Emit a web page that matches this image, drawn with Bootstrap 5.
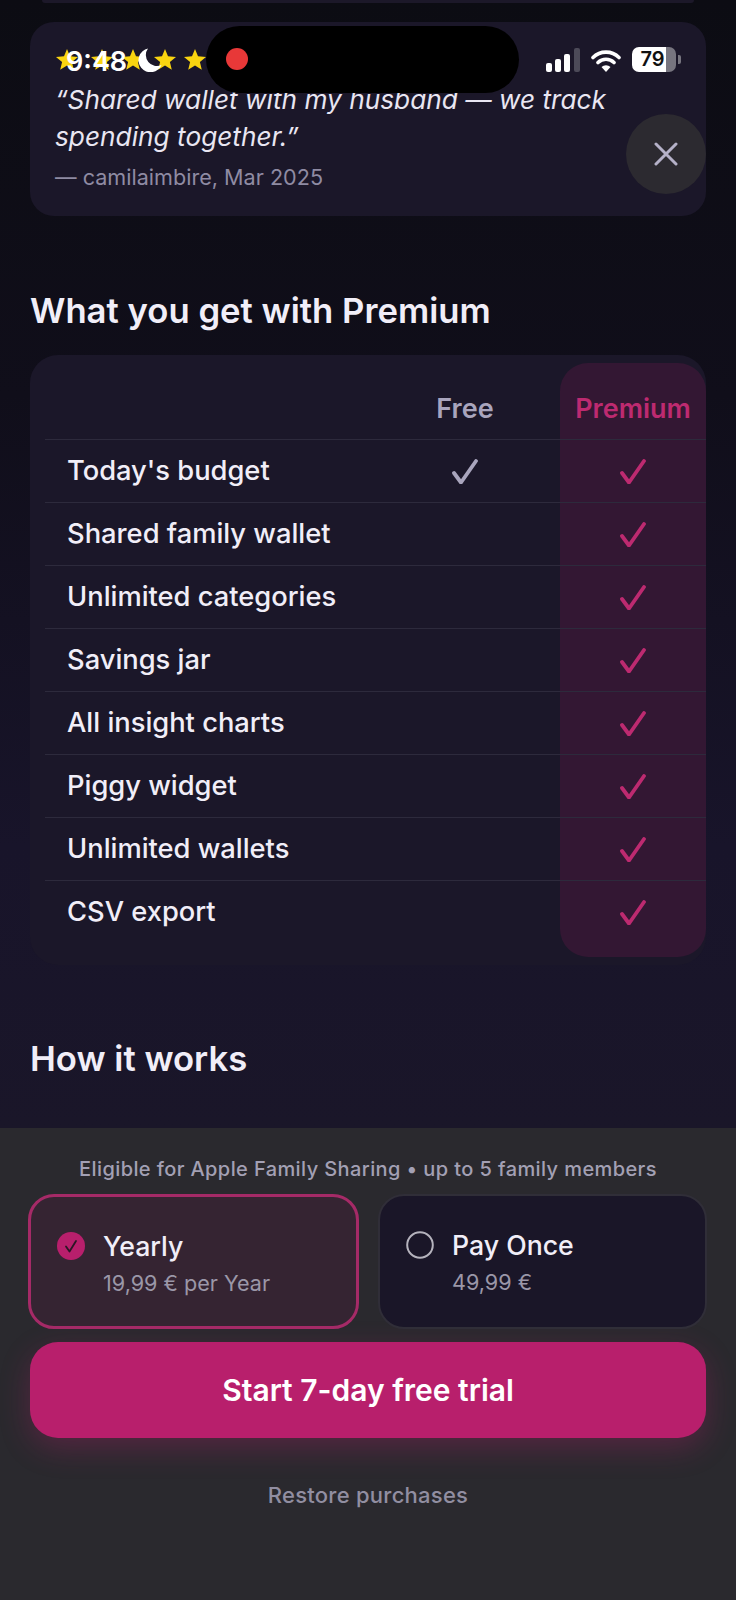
<!DOCTYPE html>
<html>
  <head>
    <title>Premium</title>
    <link href="https://cdn.jsdelivr.net/npm/bootstrap@5.3.3/dist/css/bootstrap.min.css" rel="stylesheet" />
    <script src="https://cdn.jsdelivr.net/npm/bootstrap@5.3.3/dist/js/bootstrap.bundle.min.js"></script>
    <style>
      body {
        width: 736px;
        height: 1600px;
        overflow: hidden;
        background: #0e0d16;
        font-family: Inter, "Liberation Sans", sans-serif;
        color: #f1eef8;
      }
      .page-wrap {
        height: 1128px;
        overflow: hidden;
        padding: 0 30px;
        background: linear-gradient(180deg, #0c0c13 0%, #100e1a 35%, #18142a 75%, #1a1629 100%);
      }
      .prev-card {
        height: 3px;
        margin: 0 12px 19px;
        background: #1c1829;
        border-radius: 0 0 6px 6px;
      }
      .quote-card {
        height: 194px;
        padding: 20px 25px;
        background: #1b1729;
        border-radius: 24px;
      }
      .star-row {
        height: 36px;
        padding-left: 1px;
      }
      .quote-text {
        margin: 4px 0 0;
        font-size: 26.25px;
        font-style: italic;
        line-height: 36.500px;
        color: #e9e6f2;
      }
      .quote-by {
        margin: 7px 0 0;
        font-size: 21.600px;
        line-height: 30px;
        color: #8f8ba3;
      }
      .sect-title {
        margin: 0;
        font-size: 34.700px;
        font-weight: 600;
        line-height: 40px;
        color: #f1eef8;
      }
      .title-one { padding-top: 74px; padding-bottom: 25px; }
      .title-two { padding-top: 73px; }
      .compare-card {
        height: 610px;
        padding: 0 0 0 15px;
        background: #1b1729;
        border-radius: 28px;
      }
      .premium-col {
        top: 8px;
        right: 0;
        width: 146px;
        height: 594px;
        background: #331733;
        border-radius: 28px;
      }
      .compare-head, .compare-row {
        height: 63px;
      }
      .compare-head {
        height: 84px;
        padding-top: 24px;
        font-size: 27px;
        font-weight: 600;
      }
      .compare-row {
        border-top: 1px solid #2d2a3c;
        font-size: 27.300px;
        font-weight: 500;
        color: #f1eef8;
      }
      .feat-name { width: 352px; padding-left: 22px; }
      .cell-free { width: 136px; text-align: center; color: #a9a5bd; }
      .cell-prem { width: 146px; margin-left: auto; text-align: center; color: #bd2a70; }
      .tick { width: 26px; height: 25px; display: inline-block; vertical-align: -4px; }
      .buy-sheet {
        height: 472px;
        padding: 26px 30px 0;
        background: #2a292e;
      }
      .eligible {
        margin: 0 0 10px;
        font-size: 20px;
        font-weight: 500;
        letter-spacing: 0.4px;
        line-height: 30px;
        text-align: center;
        color: #a3a0b4;
      }
      .plan-row { gap: 19px; margin-left: -2px; }
      .plan-box {
        flex: none;
        height: 135px;
        padding: 27px 0 0 26px;
        border-radius: 26px;
        gap: 18px;
        color: #f1eef8;
      }
      .plan-yearly {
        width: 331px;
        background: #352432;
        border: 3px solid #a52a67;
      }
      .plan-once {
        width: 329px;
        padding-left: 26px;
        background: #1a1628;
        border: 2px solid #302e38;
      }
      .plan-mark { width: 28px; height: 28px; flex: none; margin-top: 8px; }
      .plan-name { font-size: 26.700px; font-weight: 500; line-height: 44px; }
      .plan-price { font-size: 21.600px; line-height: 30px; color: #9b97a8; }
      .buy-btn {
        width: 676px;
        height: 96px;
        margin-top: 13px;
        padding: 0;
        border: 0;
        border-radius: 28px;
        background: #b81f6c;
        color: #fff;
        font-size: 30px;
        font-weight: 600;
        box-shadow: 0 10px 30px rgba(184, 31, 108, 0.3);
      }
      .buy-btn:hover { background: #b81f6c; color: #fff; }
      .restore {
        margin-top: 42px;
        font-size: 22px;
        font-weight: 500;
        letter-spacing: 0.25px;
        line-height: 30px;
        text-align: center;
        color: #918ea1;
      }
      /* ios overlay */
      .status-time {
        left: 66px;
        top: 44px;
        font-size: 27px;
        font-weight: 600;
        line-height: 36px;
        color: #fff;
      }
      .status-moon { left: 138px; top: 48px; width: 24px; height: 24px; }
      .island {
        left: 206px;
        top: 26px;
        width: 313px;
        height: 67px;
        background: #000;
        border-radius: 34px;
      }
      .rec-dot {
        left: 20px;
        top: 22px;
        width: 22px;
        height: 22px;
        background: #e83838;
        border-radius: 50%;
      }
      .status-right { left: 546px; top: 47px; height: 25px; gap: 11px; }
      .batt-body {
        width: 44px;
        height: 25px;
        border-radius: 7px;
        background: linear-gradient(90deg, #fff 0%, #fff 77%, #77757f 77%);
        color: #111;
        font-size: 20px;
        font-weight: 600;
        line-height: 25px;
        text-align: center;
        padding-right: 3px;
      }
      .batt-nub { left: 46px; top: 8px; width: 3px; height: 9px; background: #77757f; border-radius: 0 2px 2px 0; }
      .close-round {
        left: 626px;
        top: 114px;
        width: 80px;
        height: 80px;
        border-radius: 50%;
        background: #2c2a30;
      }
    </style>
  </head>
  <body class="position-relative">
    <div class="page-wrap">
      <div class="prev-card"></div>
      <div class="quote-card">
        <div class="star-row d-flex align-items-center">
          <svg width="158" height="24" viewBox="0 0 158 24" fill="#f9d410">
            <path id="st" d="M11 1l3 7.3 8 .6-6.1 5.1 1.9 7.8L11 17.6 4.200 21.800l1.900-7.800L0 8.900l8-.6z" />
            <use href="#st" x="35" />
            <use href="#st" x="66" />
            <use href="#st" x="98" />
            <use href="#st" x="128" />
          </svg>
        </div>
        <p class="quote-text">“Shared wallet with my husband — we track spending together.”</p>
        <p class="quote-by">— camilaimbire, Mar 2025</p>
      </div>

      <div class="title-one"><h2 class="sect-title">What you get with Premium</h2></div>

      <div class="compare-card position-relative">
        <div class="premium-col position-absolute"></div>
        <div class="compare-head d-flex align-items-center position-relative">
          <div class="feat-name"></div>
          <div class="cell-free">Free</div>
          <div class="cell-prem">Premium</div>
        </div>
        <div id="rows"></div>
      </div>

      <div class="title-two"><h2 class="sect-title">How it works</h2></div>
    </div>

    <div class="buy-sheet">
      <p class="eligible">Eligible for Apple Family Sharing • up to 5 family members</p>
      <div class="plan-row d-flex">
        <div class="plan-box plan-yearly d-flex">
          <svg class="plan-mark" viewBox="0 0 28 28">
            <circle cx="14" cy="14" r="14" fill="#b81f6c" />
            <path d="M9 14.500l3.500 5L19 9" fill="none" stroke="#2a1624" stroke-width="1.800" stroke-linecap="round" stroke-linejoin="round" />
          </svg>
          <div>
            <div class="plan-name">Yearly</div>
            <div class="plan-price">19,99 € per Year</div>
          </div>
        </div>
        <div class="plan-box plan-once d-flex">
          <svg class="plan-mark" viewBox="0 0 28 28">
            <circle cx="14" cy="14" r="12.800" fill="none" stroke="#b5b3bd" stroke-width="2" />
          </svg>
          <div>
            <div class="plan-name">Pay Once</div>
            <div class="plan-price">49,99 €</div>
          </div>
        </div>
      </div>
      <button type="button" class="btn buy-btn d-block">Start 7-day free trial</button>
      <div class="restore">Restore purchases</div>
    </div>

    <!-- status bar and close button sit on top of the page -->
    <div class="status-time position-absolute">9:48</div>
    <svg class="status-moon position-absolute" viewBox="0 0 24 24">
      <path d="M10 0.500A12 12 0 1 0 23.500 17 11 11 0 0 1 10 0.500z" fill="#fff" />
    </svg>
    <div class="island position-absolute"><div class="rec-dot position-absolute"></div></div>
    <div class="status-right position-absolute d-flex align-items-center">
      <svg width="34" height="24" viewBox="0 0 34 24">
        <rect x="0" y="15" width="6" height="9" rx="2" fill="#fff" />
        <rect x="9" y="11" width="6" height="13" rx="2" fill="#fff" />
        <rect x="18" y="6" width="6" height="18" rx="2" fill="#fff" />
        <rect x="28" y="0" width="6" height="24" rx="2" fill="#4c4a58" />
      </svg>
      <svg width="30" height="24" viewBox="0 0 30 24">
        <path d="M2 9.500a18.500 18.500 0 0 1 26 0M7 14.500a11.500 11.500 0 0 1 16 0" fill="none" stroke="#fff" stroke-width="3.600" stroke-linecap="round" />
        <path d="M15 24l-4.500-5a6.500 6.500 0 0 1 9 0z" fill="#fff" />
      </svg>
      <div class="position-relative">
        <div class="batt-body">79</div>
        <div class="batt-nub position-absolute"></div>
      </div>
    </div>
    <div class="close-round position-absolute d-flex align-items-center justify-content-center">
      <svg width="24" height="24" viewBox="0 0 24 24">
        <path d="M2 2l20 20M22 2L2 22" stroke="#b5b1c8" stroke-width="3" stroke-linecap="round" />
      </svg>
    </div>

    <script>
      let features = [
        { name: "Today's budget", free: true },
        { name: "Shared family wallet", free: false },
        { name: "Unlimited categories", free: false },
        { name: "Savings jar", free: false },
        { name: "All insight charts", free: false },
        { name: "Piggy widget", free: false },
        { name: "Unlimited wallets", free: false },
        { name: "CSV export", free: false },
      ];
      let tick = `<svg class="tick" viewBox="0 0 26 25"><path d="M2 14L9 23.500 24 2" fill="none" stroke="currentColor" stroke-width="3.800" stroke-linecap="round" stroke-linejoin="round"/></svg>`;
      let content = "";
      for (let eachRow of features) {
        content += `<div class="compare-row d-flex align-items-center position-relative">
            <div class="feat-name">${eachRow.name}</div>
            <div class="cell-free">${eachRow.free ? tick : ""}</div>
            <div class="cell-prem">${tick}</div>
          </div>`;
      }
      document.getElementById("rows").innerHTML = content;
    </script>
  </body>
</html>
